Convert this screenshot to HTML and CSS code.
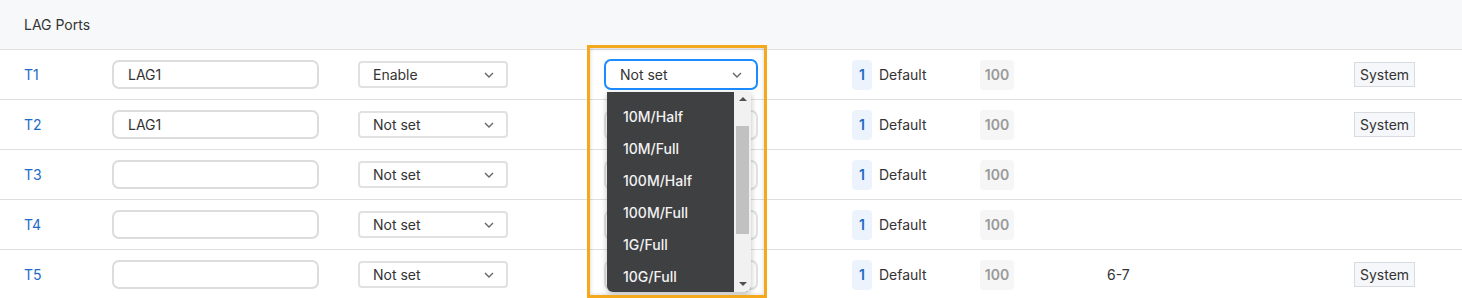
FILE: index.html
```html
<!DOCTYPE html>
<html lang="en">
<head>
    <meta charset="UTF-8">
    <title>LAG Ports</title>
    <link rel="stylesheet" href="styles.css">
</head>
<body>
    <div class="panel">
        <div class="panel-head">LAG Ports</div>

        <div class="row">
            <a class="port">T1</a>
            <div class="text-input">LAG1</div>
            <div class="select"><span>Enable</span><svg class="chev" viewBox="0 0 10 6"><polyline points="1 1 5 5 9 1"/></svg></div>
            <div class="select speed focused"><span>Not set</span><svg class="chev" viewBox="0 0 10 6"><polyline points="1 1 5 5 9 1"/></svg></div>
            <div class="vlan"><span class="vid">1</span>Default</div>
            <div><span class="prio">100</span></div>
            <div class="range"></div>
            <div><span class="tag">System</span></div>
        </div>

        <div class="row">
            <a class="port">T2</a>
            <div class="text-input">LAG1</div>
            <div class="select"><span>Not set</span><svg class="chev" viewBox="0 0 10 6"><polyline points="1 1 5 5 9 1"/></svg></div>
            <div class="select speed"></div>
            <div class="vlan"><span class="vid">1</span>Default</div>
            <div><span class="prio">100</span></div>
            <div class="range"></div>
            <div><span class="tag">System</span></div>
        </div>

        <div class="row">
            <a class="port">T3</a>
            <div class="text-input"></div>
            <div class="select"><span>Not set</span><svg class="chev" viewBox="0 0 10 6"><polyline points="1 1 5 5 9 1"/></svg></div>
            <div class="select speed"></div>
            <div class="vlan"><span class="vid">1</span>Default</div>
            <div><span class="prio">100</span></div>
            <div class="range"></div>
            <div></div>
        </div>

        <div class="row">
            <a class="port">T4</a>
            <div class="text-input"></div>
            <div class="select"><span>Not set</span><svg class="chev" viewBox="0 0 10 6"><polyline points="1 1 5 5 9 1"/></svg></div>
            <div class="select speed"></div>
            <div class="vlan"><span class="vid">1</span>Default</div>
            <div><span class="prio">100</span></div>
            <div class="range"></div>
            <div></div>
        </div>

        <div class="row">
            <a class="port">T5</a>
            <div class="text-input"></div>
            <div class="select"><span>Not set</span><svg class="chev" viewBox="0 0 10 6"><polyline points="1 1 5 5 9 1"/></svg></div>
            <div class="select speed"></div>
            <div class="vlan"><span class="vid">1</span>Default</div>
            <div><span class="prio">100</span></div>
            <div class="range">6-7</div>
            <div><span class="tag">System</span></div>
        </div>

        <!-- open speed dropdown -->
        <ul class="options">
            <li>10M/Half</li>
            <li>10M/Full</li>
            <li>100M/Half</li>
            <li>100M/Full</li>
            <li>1G/Full</li>
            <li>10G/Full</li>
            <div class="scrollbar">
                <span class="arrow up"></span>
                <span class="thumb"></span>
                <span class="arrow down"></span>
            </div>
        </ul>

        <div class="highlight"></div>
    </div>
</body>
</html>
```

FILE: styles.css
```css
* {
    margin: 0;
    padding: 0;
    box-sizing: border-box;
}

body {
    font-family: Inter, "Noto Sans", sans-serif;
    font-size: 14px;
    color: #333;
    background: #fff;
}

.panel {
    position: relative;
    width: 1462px;
    height: 298px;
    overflow: hidden;
}

.panel-head {
    height: 50px;
    padding-left: 24px;
    display: flex;
    align-items: center;
    background: #f7f8fa;
    border-bottom: 1px solid #dedfe1;
}

.row {
    height: 50px;
    padding-left: 24px;
    display: grid;
    grid-template-columns: 88px 246px 246px 248px 128px 127px 247px 1fr;
    align-items: center;
    border-bottom: 1px solid #dedfe1;
}

.port {
    color: #1d6bc6;
}

.text-input {
    width: 207px;
    height: 29px;
    border: 2px solid #dcdcdf;
    border-radius: 7px;
    padding-left: 14px;
    display: flex;
    align-items: center;
    color: #333;
}

.select {
    width: 150px;
    height: 27px;
    border: 2px solid #e0e1e3;
    border-radius: 4px;
    padding: 0 12px 0 13px;
    display: flex;
    align-items: center;
    justify-content: space-between;
    color: #333;
}

.select.speed {
    width: 154px;
    height: 30px;
    border-radius: 7px;
    padding-left: 14px;
    padding-right: 14px;
}

.select.focused {
    height: 31px;
    border-color: #1b8cff;
}

.chev {
    width: 10px;
    height: 6px;
    fill: none;
    stroke: #666;
    stroke-width: 1.4;
}

.vlan {
    display: flex;
    align-items: center;
    gap: 7px;
}

.vid {
    width: 20px;
    height: 30px;
    display: flex;
    align-items: center;
    justify-content: center;
    background: #edf3fc;
    border-radius: 4px;
    color: #1d6bc6;
    font-weight: 600;
}

.prio {
    display: inline-flex;
    align-items: center;
    justify-content: center;
    width: 34px;
    height: 30px;
    background: #f6f6f7;
    border-radius: 4px;
    color: #999;
    font-weight: 600;
}

.tag {
    display: inline-flex;
    align-items: center;
    height: 25px;
    padding: 0 5px;
    background: #f5f7fa;
    border: 1px solid #d8dce2;
    color: #333;
}

.options {
    position: absolute;
    left: 607px;
    top: 92px;
    width: 144px;
    height: 200px;
    list-style: none;
    padding-top: 8px;
    background: #3f4042;
    border-radius: 0 0 6px 6px;
    box-shadow: 0 2px 6px rgba(0, 0, 0, 0.25);
    overflow: hidden;
}

.options li {
    height: 32px;
    padding-left: 16px;
    display: flex;
    align-items: center;
    color: #f2f2f2;
    font-size: 14px;
    font-weight: 500;
}

.scrollbar {
    position: absolute;
    right: 0;
    top: 0;
    width: 17px;
    height: 100%;
    background: #f1f1f1;
    display: flex;
    flex-direction: column;
    align-items: center;
}

.arrow {
    width: 0;
    height: 0;
    border-left: 4px solid transparent;
    border-right: 4px solid transparent;
}

.arrow.up {
    margin-top: 5px;
    border-bottom: 4px solid #505050;
}

.arrow.down {
    margin-top: auto;
    margin-bottom: 6px;
    border-top: 4px solid #505050;
}

.thumb {
    width: 13px;
    height: 108px;
    margin-top: 25px;
    background: #c1c1c1;
}

.highlight {
    position: absolute;
    left: 587px;
    top: 45px;
    width: 180px;
    height: 253px;
    border: 3px solid #f5a81c;
    box-shadow: inset 0 0 4px rgba(0, 0, 0, 0.18);
    pointer-events: none;
}
```
